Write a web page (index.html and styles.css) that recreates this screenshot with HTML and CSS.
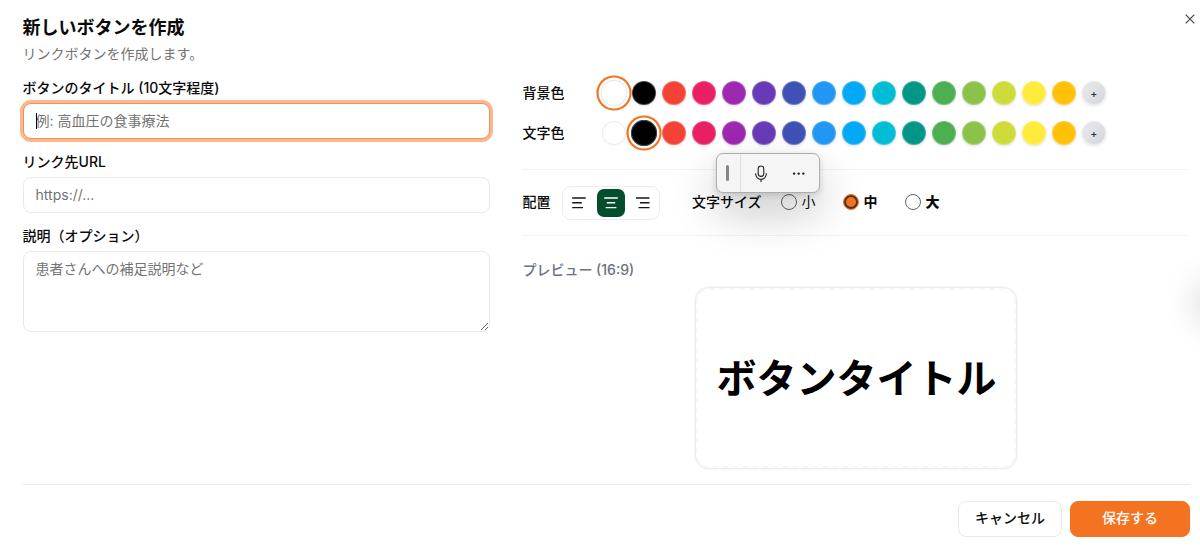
FILE: index.html
```html
<!DOCTYPE html>
<html lang="ja">
<head>
    <meta charset="UTF-8">
    <title>新しいボタンを作成</title>
    <link rel="stylesheet" href="styles.css">
</head>
<body>
    <div class="dialog">
        <button class="close" aria-label="閉じる">
            <svg width="10" height="10" viewBox="0 0 10 10"><path d="M.7.7l8.6 8.6M9.3.7L.7 9.3"/></svg>
        </button>

        <div class="header">
            <h1>新しいボタンを作成</h1>
            <p>リンクボタンを作成します。</p>
        </div>

        <div class="content">
            <!-- 入力フォーム -->
            <div class="form">
                <div class="field">
                    <label for="title">ボタンのタイトル (10文字程度)</label>
                    <div class="input-wrap">
                        <input class="focused" type="text" id="title" placeholder="例: 高血圧の食事療法">
                        <span class="caret"></span>
                    </div>
                </div>
                <div class="field">
                    <label for="url">リンク先URL</label>
                    <input type="text" id="url" placeholder="https://...">
                </div>
                <div class="field">
                    <label for="description">説明（オプション）</label>
                    <textarea id="description" placeholder="患者さんへの補足説明など"></textarea>
                </div>
            </div>

            <!-- デザイン設定 -->
            <div class="design">
                <div class="color-row">
                    <span class="row-label">背景色</span>
                    <div class="swatches" id="bg-colors"></div>
                </div>
                <div class="color-row">
                    <span class="row-label">文字色</span>
                    <div class="swatches" id="text-colors"></div>
                </div>

                <div class="options">
                    <span class="option-label">配置</span>
                    <div class="align-group">
                        <button aria-label="左"><svg width="16" height="16" viewBox="0 0 16 16"><path d="M1.2 3h13.5M1.2 7.8h9.6M1.2 12.6h10.8"/></svg></button>
                        <button class="active" aria-label="中央"><svg width="16" height="16" viewBox="0 0 16 16"><path d="M1.2 3h13.6M3.8 7.8h8.4M2.6 12.6h10.8"/></svg></button>
                        <button aria-label="右"><svg width="16" height="16" viewBox="0 0 16 16"><path d="M1 3h13.5M5 7.8h9.5M3.5 12.6h11"/></svg></button>
                    </div>
                    <span class="option-label size-label">文字サイズ</span>
                    <div class="sizes">
                        <label class="size small"><span class="radio"></span><span class="size-name">小</span></label>
                        <label class="size medium"><span class="radio checked"></span><span class="size-name">中</span></label>
                        <label class="size large"><span class="radio"></span><span class="size-name">大</span></label>
                    </div>
                </div>

                <div class="preview-label">プレビュー (16:9)</div>
                <div class="preview">ボタンタイトル</div>
            </div>
        </div>

        <div class="footer">
            <button class="btn cancel">キャンセル</button>
            <button class="btn save">保存する</button>
        </div>

        <!-- 音声入力ツールバー -->
        <div class="voice-bar">
            <div class="grip"><span></span></div>
            <div class="voice-buttons">
                <svg width="14" height="18" viewBox="0 0 14 18"><rect x="4.2" y="1" width="5.6" height="10.4" rx="2.8"/><path d="M1.7 8.3v.8a5.3 5.3 0 0 0 10.6 0v-.8M7 14.4V17"/></svg>
                <svg class="dots" width="14" height="4" viewBox="0 0 14 4"><circle cx="2.1" cy="1.6" r="1.2"/><circle cx="6.7" cy="1.6" r="1.2"/><circle cx="11.3" cy="1.6" r="1.2"/></svg>
            </div>
        </div>
        <div class="edge-shadow"></div>
    </div>

    <script>
    var colors = ['#ffffff', '#000000', '#f44336', '#e91e63', '#9c27b0', '#673ab7', '#3f51b5', '#2196f3',
        '#03a9f4', '#00bcd4', '#009688', '#4caf50', '#8bc34a', '#cddc39', '#ffeb3b', '#ffc107'];

    function renderSwatches(id, selected) {
        var box = document.getElementById(id);
        colors.forEach(function(color) {
            var button = document.createElement('button');
            button.className = 'swatch' + (color === selected ? ' selected' : '');
            if (color === '#ffffff') {
                button.className += ' white';
            }
            button.style.backgroundColor = color;
            box.appendChild(button);
        });
        var more = document.createElement('button');
        more.className = 'swatch more';
        more.textContent = '+';
        box.appendChild(more);
    }

    renderSwatches('bg-colors', '#ffffff');
    renderSwatches('text-colors', '#000000');
    </script>
</body>
</html>
```
FILE: styles.css
```css
* {
    box-sizing: border-box;
}
body {
    margin: 0;
    background-color: #fff;
    color: #0a0a0a;
    font-family: Inter, "Noto Sans CJK JP", sans-serif;
    font-size: 14px;
}
button, input, textarea {
    font-family: inherit;
    font-size: 14px;
    margin: 0;
}
.dialog {
    position: relative;
    display: flex;
    flex-direction: column;
    width: 1200px;
    height: 550px;
    padding: 19px 10px 13px 22.6px;
    overflow: hidden;
}
.close {
    position: absolute;
    top: 13.5px;
    right: 5px;
    display: flex;
    padding: 0;
    border: none;
    background: none;
}
.close svg {
    fill: none;
    stroke: #444;
    stroke-width: 1.2;
}
.header {
    height: 62px;
}
h1 {
    margin: 0;
    font-size: 18px;
    line-height: 18px;
    font-weight: 600;
}
.header p {
    margin: 7px 0 0;
    line-height: 20px;
    color: #737373;
}
.content {
    display: flex;
    gap: 32px;
    height: 403px;
}
.form {
    display: flex;
    flex-direction: column;
    gap: 16px;
    width: 467.8px;
}
.field {
    display: flex;
    flex-direction: column;
    gap: 8px;
}
.field > label {
    height: 14px;
    line-height: 14px;
    font-weight: 500;
}
.input-wrap {
    position: relative;
    display: flex;
}
input, textarea {
    display: block;
    width: 100%;
    height: 36px;
    padding: 0 12px 1px;
    border: 1px solid #e9e9e9;
    border-radius: 8px;
    background-color: #fff;
    outline: none;
}
textarea {
    height: 81px;
    padding: 7px 12px;
    line-height: 20px;
}
input::placeholder, textarea::placeholder {
    color: #737373;
}
input.focused {
    padding-bottom: 2px;
    border-color: #f58e50;
    box-shadow: 0 0 0 3px #f9b88f;
}
.caret {
    position: absolute;
    left: 13px;
    top: 10px;
    width: 1px;
    height: 16px;
    background-color: #000;
}
.design {
    width: 665px;
}
.color-row {
    display: flex;
    align-items: center;
    height: 24px;
    margin-bottom: 16px;
}
.row-label {
    width: 79.5px;
    padding-bottom: 2px;
    font-weight: 500;
}
.swatches {
    display: flex;
    gap: 6px;
}
.swatch {
    width: 24px;
    height: 24px;
    padding: 0;
    border: 1px solid rgba(255, 255, 255, 0.25);
    border-radius: 50%;
    box-shadow: 0 1px 3px rgba(0, 0, 0, 0.12);
}
.swatch.white {
    border: 1px solid #e9eaec;
    box-shadow: 0 1px 2px rgba(0, 0, 0, 0.04);
}
.swatch.selected {
    transform: scale(1.1);
    box-shadow: 0 0 0 2px #fff, 0 0 0 4px #f37321;
}
.swatch.more {
    border-color: #e5e7eb;
    background: linear-gradient(135deg, #e9eaed, #d3d6dc);
    color: #1f2937;
    font-size: 10px;
    font-weight: 500;
    line-height: 21px;
}
.options {
    display: flex;
    align-items: center;
    height: 67px;
    margin-top: 24px;
    border-top: 1px solid #f3f3f3;
    border-bottom: 1px solid #f3f3f3;
}
.option-label {
    padding-bottom: 3px;
    font-weight: 500;
}
.align-group {
    display: flex;
    gap: 4px;
    margin-left: 11.5px;
    padding: 2px;
    border: 1px solid #ececec;
    border-radius: 9px;
}
.align-group button {
    display: flex;
    align-items: center;
    justify-content: center;
    width: 28px;
    height: 28px;
    padding: 0;
    border: none;
    border-radius: 7px;
    background: none;
}
.align-group svg {
    fill: none;
    stroke: #171717;
    stroke-width: 1.4;
}
.align-group .active {
    background-color: #034e2d;
}
.align-group .active svg {
    stroke: #fff;
}
.size-label {
    margin-left: 32px;
}
.sizes {
    display: flex;
    margin-left: 20px;
    padding-bottom: 1px;
}
.size {
    display: flex;
    align-items: center;
    gap: 4px;
    width: 62px;
}
.size-name {
    padding-bottom: 2px;
}
.size.medium {
    font-weight: 700;
}
.size.large {
    font-weight: 900;
}
.radio {
    width: 16px;
    height: 16px;
    border: 1px solid #666;
    border-radius: 50%;
    background-color: #fff;
}
.radio.checked {
    border: 1px solid #f37321;
    background-color: #f37321;
    box-shadow: inset 0 0 0 2px #493426;
}
.preview-label {
    margin-top: 24px;
    line-height: 20px;
    font-weight: 500;
    color: #6b7280;
}
.preview {
    display: flex;
    align-items: center;
    justify-content: center;
    width: 320px;
    height: 180px;
    margin: 8px auto 0 174px;
    padding-bottom: 4px;
    border: 2px dashed #f8f8f8;
    border-radius: 13px;
    color: #000;
    font-size: 40px;
    font-weight: 700;
    box-shadow: 0 0 3px rgba(0, 0, 0, 0.22);
}
.footer {
    display: flex;
    justify-content: flex-end;
    gap: 8px;
    padding-top: 16px;
    border-top: 1px solid #e9e9e9;
}
.btn {
    height: 36px;
    padding: 0 0 4px;
    border: 1px solid #e9e9e9;
    border-radius: 8px;
    font-weight: 500;
}
.cancel {
    width: 104px;
    background-color: #fff;
    color: #0a0a0a;
}
.save {
    width: 120px;
    border-color: #f37321;
    background-color: #f37321;
    color: #fff;
}
.voice-bar {
    position: absolute;
    left: 716px;
    top: 153px;
    display: flex;
    width: 104px;
    height: 40px;
    border: 1px solid #adadad;
    border-radius: 7px;
    background-color: #f5f5f5;
    box-shadow: 0 2px 6px rgba(0, 0, 0, 0.14), 0 20px 44px rgba(0, 0, 0, 0.22);
}
.grip {
    display: flex;
    align-items: center;
    justify-content: center;
    width: 24px;
    padding-right: 3px;
    border-right: 1px solid #e0e0e0;
}
.grip span {
    width: 3px;
    height: 16px;
    border-radius: 2px;
    background-color: #858585;
}
.voice-buttons {
    display: flex;
    align-items: center;
    gap: 24px;
    padding: 2px 0 0 13px;
}
.voice-buttons svg {
    fill: none;
    stroke: #222;
    stroke-width: 1.1;
}
.voice-buttons .dots {
    fill: #222;
    stroke: none;
}
.edge-shadow {
    position: absolute;
    left: 1202px;
    top: 284px;
    width: 40px;
    height: 30px;
    border-radius: 8px;
    box-shadow: 0 4px 36px rgba(0, 0, 0, 0.26);
}
```
